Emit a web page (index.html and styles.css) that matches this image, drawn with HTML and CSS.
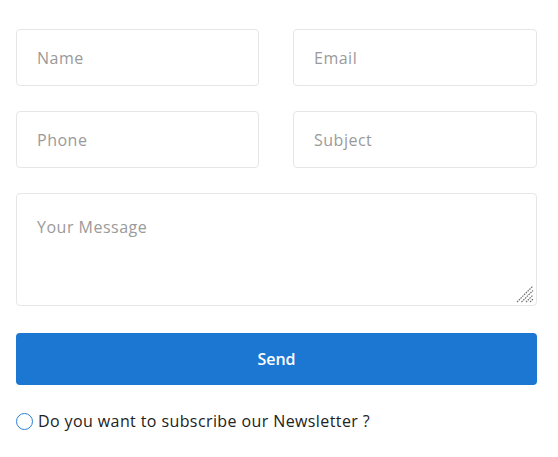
FILE: index.html
```html
<!DOCTYPE html>
<html>
<head>
<meta charset="utf-8">
<link rel="stylesheet" href="styles.css">
</head>
<body>
<form class="contact-form">
  <div class="grid">
    <input class="field" type="text" placeholder="Name">
    <input class="field" type="email" placeholder="Email">
    <input class="field" type="text" placeholder="Phone">
    <input class="field" type="text" placeholder="Subject">
  </div>
  <div class="message-wrap">
    <textarea class="field message" placeholder="Your Message"></textarea>
    <svg class="grip" width="18" height="18" viewBox="0 0 18 18" aria-hidden="true">
      <g stroke="#6f6f6f" stroke-width="1.2" stroke-dasharray="1.6 0.9">
        <line x1="1" y1="17" x2="17" y2="1"/>
        <line x1="5.5" y1="17" x2="17" y2="5.5"/>
        <line x1="10" y1="17" x2="17" y2="10"/>
        <line x1="14" y1="17" x2="17" y2="14"/>
      </g>
    </svg>
  </div>
  <button class="send" type="button">Send</button>
  <label class="newsletter">
    <input class="radio" type="radio" name="nl">
    <span>Do you want to subscribe our Newsletter ?</span>
  </label>
</form>
</body>
</html>
```

FILE: styles.css
```css
html, body {
  margin: 0;
  padding: 0;
  background: #ffffff;
}
body {
  font-family: "Open Sans", "Liberation Sans", sans-serif;
}
.contact-form {
  padding: 29px 21px 0 16px;
  display: flex;
  flex-direction: column;
}
.grid {
  display: grid;
  grid-template-columns: 243px 244px;
  column-gap: 34px;
  row-gap: 25px;
}
.field {
  box-sizing: border-box;
  height: 57px;
  border: 1px solid #e6e6e6;
  border-radius: 4px;
  padding: 0 20px;
  font-family: inherit;
  font-size: 16px;
  letter-spacing: 0.5px;
  color: #333;
  outline: none;
  background: #fff;
}
.field::placeholder {
  color: #9a9a9a;
}
.message-wrap {
  position: relative;
  margin-top: 25px;
}
.message {
  height: 113px;
  padding: 22px 20px;
  resize: none;
  display: block;
  width: 100%;
}
.grip {
  position: absolute;
  right: 3px;
  bottom: 3px;
  pointer-events: none;
}
.send {
  margin-top: 27px;
  height: 52px;
  border: none;
  border-radius: 4px;
  background: #1c77d2;
  color: #fff;
  font-family: inherit;
  font-size: 16px;
  font-weight: 600;
}
.newsletter {
  margin-top: 25px;
  display: flex;
  align-items: center;
  gap: 5px;
  font-size: 16px;
  letter-spacing: 0.4px;
  color: #222;
}
.radio {
  appearance: none;
  -webkit-appearance: none;
  margin: 0;
  width: 17px;
  height: 17px;
  border: 1.5px solid #2a7fd6;
  border-radius: 50%;
  background: #fff;
}
```
